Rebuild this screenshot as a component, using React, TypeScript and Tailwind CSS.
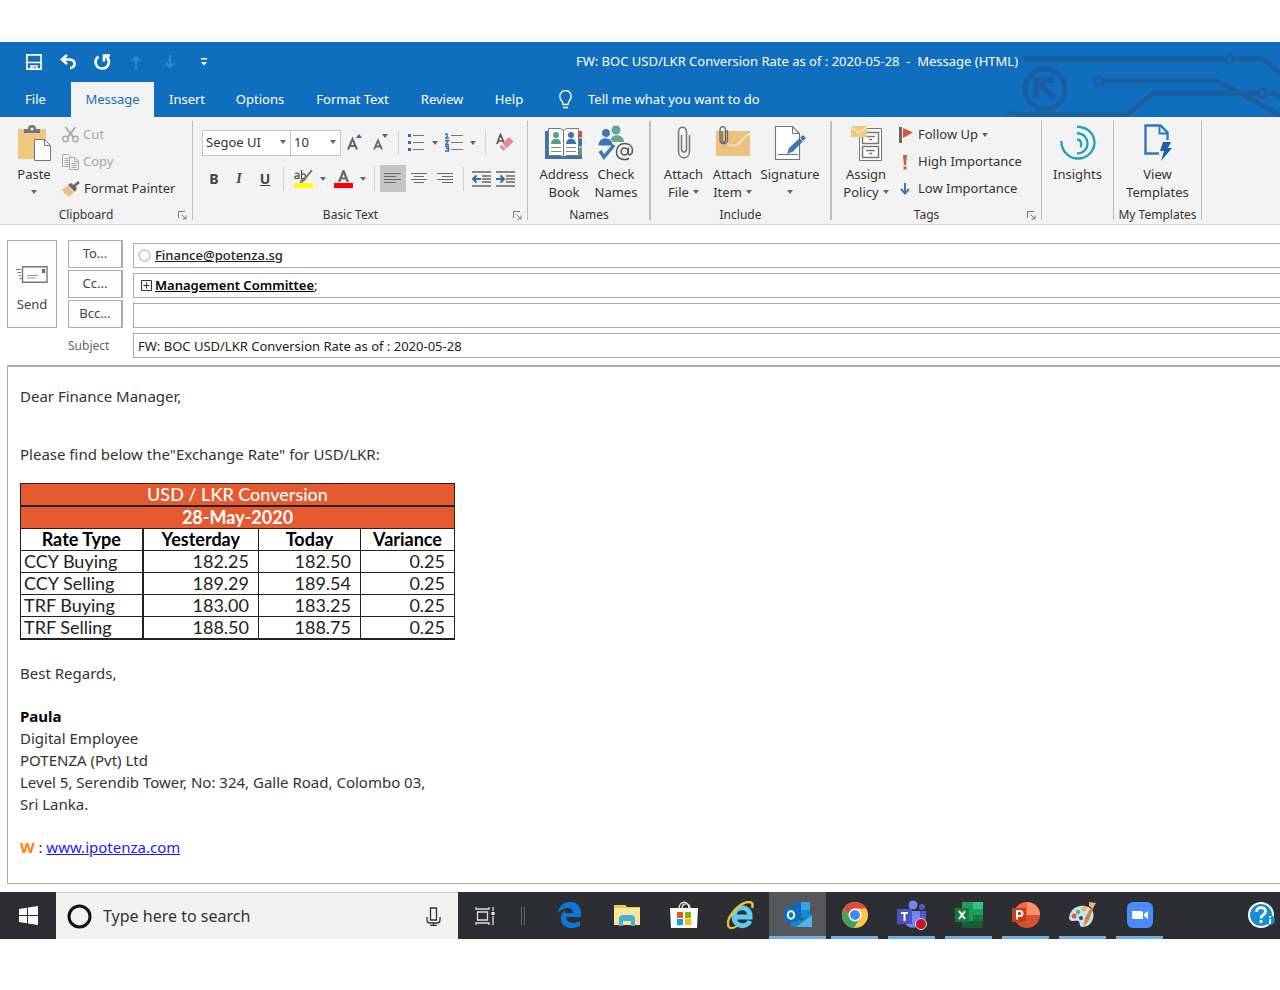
import { useState } from 'react';
import type { ReactNode } from 'react';
import clsx from 'clsx';

const rates = [
  { type: 'CCY Buying', yesterday: '182.25', today: '182.50', variance: '0.25' },
  { type: 'CCY Selling', yesterday: '189.29', today: '189.54', variance: '0.25' },
  { type: 'TRF Buying', yesterday: '183.00', today: '183.25', variance: '0.25' },
  { type: 'TRF Selling', yesterday: '188.50', today: '188.75', variance: '0.25' },
];

const tabs = [
  { name: 'File', width: 'w-[71px]' },
  { name: 'Message', width: 'w-[83px]' },
  { name: 'Insert', width: 'w-[66px]' },
  { name: 'Options', width: 'w-[80px]' },
  { name: 'Format Text', width: 'w-[105px]' },
  { name: 'Review', width: 'w-[74px]' },
  { name: 'Help', width: 'w-[60px]' },
];

function Arrow({ className = '' }: { className?: string }) {
  return (
    <svg viewBox="0 0 6 4" className={clsx('inline-block h-1 w-1.5 shrink-0 fill-[#666]', className)} aria-hidden="true">
      <path d="M0 0h6L3 4z" />
    </svg>
  );
}

function Launcher() {
  return (
    <button aria-label="More options" className="absolute right-[5px] bottom-0">
      <svg width="9" height="9" viewBox="0 0 9 9" fill="none" stroke="#777">
        <path d="M.5 7V.5H7M3.500 3.500l4 4M8 4.500V8H4.500" />
      </svg>
    </button>
  );
}

interface GroupProps {
  label?: string;
  launcher?: boolean;
  className: string;
  children: ReactNode;
}

function Group({ label, launcher, className, children }: GroupProps) {
  return (
    <section className={clsx('relative my-1 flex shrink-0 flex-col border-[#bdbdbd]', className)}>
      <div className="flex h-[81px] shrink-0">{children}</div>
      <div className={clsx('mt-[5px] text-center text-xs leading-4 whitespace-nowrap', launcher && 'pr-5')}>{label}</div>
      {launcher && <Launcher />}
    </section>
  );
}

interface BigButtonProps {
  icon: ReactNode;
  lines: string[];
  arrow?: boolean;
  className: string;
}

function BigButton({ icon, lines, arrow, className }: BigButtonProps) {
  return (
    <button className={clsx('flex shrink-0 flex-col items-center text-[13px] leading-[18px] whitespace-nowrap', className)}>
      <span className="flex h-[44px] items-center">{icon}</span>
      {lines.map((line, i) => (
        <span key={line} className="flex items-center gap-1">
          {line}
          {arrow && i > 0 && <Arrow />}
        </span>
      ))}
      {arrow && lines.length === 1 && <Arrow className="mt-[7px]" />}
    </button>
  );
}

function SmallButton({ icon, children, className }: { icon: ReactNode; children: ReactNode; className?: string }) {
  return (
    <button className={clsx('flex h-[27px] items-center gap-1 text-[13px] whitespace-nowrap', className)}>
      {icon}
      {children}
    </button>
  );
}

function Tool({ label, className, children }: { label: string; className: string; children: ReactNode }) {
  return (
    <button aria-label={label} className={clsx('flex h-[27px] shrink-0 items-center justify-center', className)}>
      {children}
    </button>
  );
}

function Divider() {
  return <span className="mx-[5px] h-6 w-px shrink-0 bg-[#d0d0d0]" />;
}

function Lines({ d }: { d: string }) {
  return (
    <svg width="18" height="14" viewBox="0 0 18 14" fill="none" stroke="#6a6a6a" strokeWidth="1.200">
      <path d={d} />
    </svg>
  );
}

/* Ribbon icons */

function PasteIcon() {
  return (
    <svg width="34" height="36" viewBox="0 0 34 36">
      <path d="M1 4h28v30H1z" fill="#edc87e" />
      <path d="M7 8V4h4a4 4 0 0 1 8 0h4v4z" fill="#777" />
      <circle cx="15" cy="4" r="1.500" fill="#f3f3f3" />
      <path d="M17.500 14.500h10l6 6v15h-16z" fill="#fff" stroke="#777" />
      <path d="M27.500 14.500v6h6" fill="none" stroke="#777" />
    </svg>
  );
}

function CutIcon() {
  return (
    <svg width="17" height="17" viewBox="0 0 17 17" fill="none" stroke="#a9a9a9" strokeWidth="1.400">
      <circle cx="3.500" cy="13" r="2.700" />
      <circle cx="13.500" cy="13" r="2.700" />
      <path d="M3.500 1l8 10.500M13.500 1l-8 10.500" strokeWidth="2" />
    </svg>
  );
}

function CopyIcon() {
  return (
    <svg width="17" height="16" viewBox="0 0 17 16" fill="#f3f3f3" stroke="#a9a9a9">
      <path d="M.5 12.500V.5h6l3 3v9zM2.500 4.500h4M2.500 6.500h4M2.500 8.500h4M2.500 10.500h4" />
      <path d="M7.500 15.500v-12h5.500l3.500 3.500v8.500zM12.500 3.500V7.500h4M9.500 9.500h5M9.500 11.500h5M9.500 13.500h5" />
    </svg>
  );
}

function PainterIcon() {
  return (
    <svg width="18" height="16" viewBox="0 0 18 16">
      <path d="M0 8l6-3 6 6-5 5-3-3H2.500z" fill="#edbf7b" />
      <path d="M6 4l3-2 6 5-2 4z" fill="#666" />
      <path d="M11 6l6-5" stroke="#666" strokeWidth="2.500" />
    </svg>
  );
}

function AddressBookIcon() {
  return (
    <svg width="38" height="33" viewBox="0 0 38 33">
      <path d="M0 4h37v28H0z" fill="#3b74b3" />
      <path d="M33 4h4v7h-4z" fill="#d8512f" />
      <path d="M33 20h4v8h-4z" fill="#56a286" />
      <path d="M33 11h5M33 20h5" stroke="#f3f3f3" />
      <path d="M3.500 1.500h12l3 2 3-2h12v27h-12l-3 1.500-3-1.500h-12z" fill="#fff" stroke="#777" />
      <path d="M18.500 3v27" stroke="#777" />
      <circle cx="11" cy="8" r="3" fill="#56a286" />
      <path d="M6 17c0-7 10-7 10 0z" fill="#56a286" />
      <circle cx="26" cy="8" r="3" fill="#3b74b3" />
      <path d="M21 17c0-7 10-7 10 0z" fill="#3b74b3" />
      <path d="M6 20.500h10M6 24.500h10M21 20.500h10M21 24.500h10" stroke="#888" />
    </svg>
  );
}

function CheckNamesIcon() {
  return (
    <svg width="36" height="36" viewBox="0 0 36 36">
      <circle cx="18" cy="5" r="4.500" fill="#65a98c" />
      <path d="M12 17c0-9 14-9 14 0z" fill="#65a98c" />
      <circle cx="8" cy="8" r="4.500" fill="#3f75b8" stroke="#f3f3f3" />
      <path d="M0 21c0-11 15-11 15 0z" fill="#3f75b8" stroke="#f3f3f3" />
      <path d="M2 26l4 6L16 20" fill="none" stroke="#3f75b8" strokeWidth="3.500" />
      <circle cx="27" cy="27" r="10" fill="#f3f3f3" />
      <circle cx="26.500" cy="26.500" r="3.500" fill="none" stroke="#555" strokeWidth="1.500" />
      <path d="M30.500 22.500l-.5 5.500c0 3 4.500 2 4.500-2.500 0-5-4-7-8-7-5 0-8 4-8 8.500 0 7 7.500 9 12.500 6.500" fill="none" stroke="#555" strokeWidth="1.500" />
    </svg>
  );
}

function ClipIcon() {
  return (
    <svg width="14" height="34" viewBox="0 0 14 34" fill="none" stroke="#777" strokeWidth="1.500">
      <path d="M4.500 9v14c0 4 5 4 5 0V6c0-6.500-8-6.500-8 0v19c0 9 11 9 11 0V9" />
    </svg>
  );
}

function AttachItemIcon() {
  return (
    <svg width="34" height="36" viewBox="0 0 34 36">
      <path d="M0 6h34v25H0z" fill="#eac17d" />
      <path d="M9 15c3 6 12 8 16 1 3-4 6-6 9-7" fill="none" stroke="#f8efdd" strokeWidth="1.500" />
      <path d="M6 6v9c0 3 3.500 3 3.500 0V5c0-4.500-5.500-4.500-5.500 0v10c0 5 7.500 5 7.500 0V5" fill="none" stroke="#666" strokeWidth="1.300" />
    </svg>
  );
}

function SignatureIcon() {
  return (
    <svg width="32" height="36" viewBox="0 0 32 36">
      <path d="M1.500 1.500h17l7 7v26h-24z" fill="#fff" stroke="#777" strokeWidth="1.200" />
      <path d="M18.500 1.500v7h7" fill="none" stroke="#777" />
      <path d="M4 29.500h20" stroke="#3f75b8" />
      <path d="M13 29l2-6L29 10l3 3-13 13.500z" fill="#3f75b8" />
      <path d="M26 13l3 3" stroke="#fff" />
    </svg>
  );
}

function PolicyIcon() {
  return (
    <svg width="31" height="36" viewBox="0 0 31 36">
      <path d="M8.500 3.500h22v32h-22z" fill="#fff" stroke="#777" />
      <path d="M11.500 7.500h16v11h-16zM11.500 21.500h16v11h-16z" fill="none" stroke="#777" strokeWidth="1.500" />
      <path d="M15 11.500h9M15 25.500h9" stroke="#777" strokeWidth="1.500" />
      <path d="M18 14.500h3M18 28.500h3" stroke="#777" strokeWidth="1.500" />
      <path d="M0 1h16v11H0z" fill="#eec980" />
      <path d="M0 2l8 6 8-6" fill="none" stroke="#fff" />
    </svg>
  );
}

function InsightsIcon() {
  return (
    <svg width="36" height="36" viewBox="0 0 36 36" fill="none" stroke="#25a3b4" strokeWidth="2.400">
      <path d="M1.500 16a16.500 16.500 0 0 0 33 2C34.500 9 28 2 17 1.800" />
      <path d="M17 8c14 1 14 20 0 20.500" />
      <path d="M17 14.500c5 0 5 6.500 3 7.500" />
    </svg>
  );
}

function TemplatesIcon() {
  return (
    <svg width="28" height="38" viewBox="0 0 28 38">
      <path d="M15 29.500H1.500v-28h15l7 7V16" fill="none" stroke="#2b79c2" strokeWidth="2.400" />
      <path d="M15.500 1.500v8h8" fill="none" stroke="#2b79c2" strokeWidth="2" />
      <path d="M19 18h8l-3 6h4L17 37l3-10h-4z" fill="#1b5fa8" />
    </svg>
  );
}

function EraserIcon() {
  return (
    <svg width="18" height="20" viewBox="0 0 18 20">
      <path d="M1 11L4.500 1.500 8 10M2.500 8h4" fill="none" stroke="#555" strokeWidth="1.700" />
      <path d="M6.500 10L13 4l4.500 4.500-7 7z" fill="#e8879a" />
      <path d="M5.500 11.500l4 4-2 2.500-4-4z" fill="#e8879a" />
    </svg>
  );
}

function Indent({ out }: { out?: boolean }) {
  return (
    <svg width="19" height="16" viewBox="0 0 19 16" fill="none">
      <path d="M0 1h19M10 5h9M10 8h9M10 11h9M0 15h19" stroke="#666" strokeWidth="1.600" />
      <path d={out ? 'M9 8H1M4.500 4.500L1 8l3.500 3.500' : 'M0 8h8M4.500 4.500L8 8l-3.500 3.500'} stroke="#2e6db4" strokeWidth="2" />
    </svg>
  );
}

/* Decoration in the right end of the title bar */

function Circuit() {
  return (
    <svg width="276" height="75" viewBox="0 0 276 75" fill="none" stroke="#195f9f" strokeWidth="5" className="pointer-events-none absolute top-0 right-0">
      <path d="M20 17h201M230 17h27c8 3 14 10 22 17" />
      <path d="M100 39h112c16 6 44 24 68 36M12 73h110l28-22h104M264 51c5 0 9 2 14 5" />
      <circle cx="225" cy="17" r="4" strokeWidth="3" />
      <circle cx="95" cy="39" r="4.500" strokeWidth="3" />
      <circle cx="258" cy="51" r="4" strokeWidth="3" fill="#106ebe" />
      <path d="M3 75a5 5 0 0 1 9-2" strokeWidth="3" />
      <circle cx="41" cy="47" r="20" />
      <path d="M32 56V38h18M33 39l17 17" strokeWidth="6" />
    </svg>
  );
}

/* Taskbar icons */

function EdgeIcon() {
  return (
    <svg width="24" height="26" viewBox="0 0 24 26">
      <path d="M0 11C2-4 23-4 23 11v4H8c1 7 9 7 14 4v5C12 29 2 25 3 15c0-3 3-6 5-7-1 1-1 2-1 3h8C15 4 5 5 0 11z" fill="#0b78d8" />
    </svg>
  );
}

function FolderIcon() {
  return (
    <svg width="26" height="22" viewBox="0 0 26 22">
      <path d="M0 1h11l2 2h13v18H0z" fill="#f0c954" />
      <path d="M0 4h26v17H0z" fill="#fbe596" />
      <path d="M5 22v-9l3-2h10l3 2v9h-4v-5H9v5z" fill="#3fb2e3" />
    </svg>
  );
}

function StoreIcon() {
  return (
    <svg width="28" height="28" viewBox="0 0 28 28">
      <path d="M9 8c0-9 10-9 10 0M12 8c0-7 8-7 8 0" fill="none" stroke="#ddd" strokeWidth="1.500" />
      <path d="M0 7h28l-1 20H1z" fill="#fff" />
      <path d="M7 11h6v6H7z" fill="#f25022" />
      <path d="M15 11h6v6h-6z" fill="#7fba00" />
      <path d="M7 18h6v6H7z" fill="#00a4ef" />
      <path d="M15 18h6v6h-6z" fill="#ffb900" />
    </svg>
  );
}

function ExplorerIcon() {
  return (
    <svg width="28" height="28" viewBox="0 0 28 28" fill="none">
      <path d="M23 20c-4 8-16 5-16-4C7 4 23 4 23 15v1H9" stroke="#5ccdf2" strokeWidth="5" />
      <path d="M2 26C-3 19 12 1 22 1c4 0 4 3 3 6" stroke="#eec22c" strokeWidth="2.500" />
      <path d="M2 26c1 2 5 1 8-1" stroke="#eec22c" strokeWidth="2" />
    </svg>
  );
}

function OutlookIcon() {
  return (
    <svg width="28" height="26" viewBox="0 0 28 26">
      <path d="M9 0h17v16H9z" fill="#1067b8" />
      <path d="M17 0h9v8h-9z" fill="#36a3e5" />
      <path d="M17 8h9v8h-9z" fill="#1589d6" />
      <path d="M7 25V13l10 6 11-6v12z" fill="#1a84d2" />
      <path d="M28 13v12H12z" fill="#4db4ec" />
      <path d="M0 6h14v14H0z" fill="#0a6fc9" />
      <ellipse cx="7" cy="13" rx="3.200" ry="3.700" fill="none" stroke="#fff" strokeWidth="2" />
    </svg>
  );
}

function ChromeIcon() {
  return (
    <svg width="28" height="28" viewBox="0 0 28 28">
      <circle cx="14" cy="14" r="13" fill="#f9ca43" />
      <path d="M2.700 7.500a13 13 0 0 1 22.600 0H14L8.500 17z" fill="#da4d3d" />
      <path d="M2.700 7.500A13 13 0 0 0 13 27l6-10H8.500z" fill="#3ba55c" />
      <circle cx="14" cy="14" r="6.500" fill="#fff" />
      <circle cx="14" cy="14" r="5" fill="#4688f1" />
    </svg>
  );
}

function TeamsIcon() {
  return (
    <svg width="30" height="30" viewBox="0 0 30 30">
      <circle cx="16" cy="5" r="4.500" fill="#7b83eb" />
      <circle cx="25" cy="7" r="3" fill="#5059c9" />
      <path d="M20 11h9v10c0 5-9 5-9 0z" fill="#5059c9" />
      <path d="M8 11h15v10c0 9-15 9-15 0z" fill="#7b83eb" />
      <path d="M0 9h15v15H0z" fill="#4b53bc" />
      <path d="M4 13h7M7.500 13v8" stroke="#fff" strokeWidth="2" />
      <circle cx="24" cy="24" r="5.500" fill="#c4122f" stroke="#e8d8dc" />
    </svg>
  );
}

function ExcelIcon() {
  return (
    <svg width="28" height="26" viewBox="0 0 28 26">
      <path d="M7 0h21v26H7z" fill="#1f9d61" />
      <path d="M18 0h10v7H18z" fill="#33c481" />
      <path d="M18 13h10v6H18z" fill="#107c41" />
      <path d="M7 19h21v7H7z" fill="#185c37" />
      <path d="M0 6h14v14H0z" fill="#107c41" />
      <path d="M4 9l6 8M10 9l-6 8" stroke="#fff" strokeWidth="2" />
    </svg>
  );
}

function PowerPointIcon() {
  return (
    <svg width="28" height="26" viewBox="0 0 28 26">
      <circle cx="15" cy="13" r="13" fill="#d35230" />
      <path d="M15 0a13 13 0 0 1 13 13H15z" fill="#ff8f6b" />
      <path d="M15 0v13H2A13 13 0 0 1 15 0z" fill="#ed6c47" />
      <path d="M0 6h14v14H0z" fill="#c43e1c" />
      <path d="M5 17.500V9h2.500c4 0 4 5 0 5H5" fill="none" stroke="#fff" strokeWidth="2" />
    </svg>
  );
}

function PaintIcon() {
  return (
    <svg width="28" height="28" viewBox="0 0 28 28">
      <path d="M0 17C1 3 20 1 24 11c2 6-2 15-10 15-5 0-2-5-5-6s-8 2-9-3z" fill="#c5e3f2" />
      <circle cx="5" cy="15" r="2.500" fill="#e2574c" />
      <circle cx="9" cy="11" r="2.200" fill="#60b75b" />
      <circle cx="15" cy="8" r="2.500" fill="#f2b62b" />
      <circle cx="12" cy="17" r="2" fill="#2b4b66" />
      <path d="M14 27l2-10 7-13 2 1-5 14z" fill="#d98736" />
      <path d="M20 1l7 1-3 5-4-2z" fill="#dcb98a" />
    </svg>
  );
}

function ZoomIcon() {
  return (
    <svg width="28" height="28" viewBox="0 0 28 28">
      <rect x="1" y="1" width="26" height="26" rx="6" fill="#4a8cff" />
      <path d="M6 10h9c2 0 2 1 2 2v6H8c-2 0-2-1-2-2zM18 13l4-3v8l-4-3z" fill="#fff" />
    </svg>
  );
}

const apps = [
  { name: 'Edge', icon: <EdgeIcon /> },
  { name: 'File Explorer', icon: <FolderIcon /> },
  { name: 'Store', icon: <StoreIcon /> },
  { name: 'Internet Explorer', icon: <ExplorerIcon /> },
  { name: 'Outlook', icon: <OutlookIcon />, active: true, running: true },
  { name: 'Chrome', icon: <ChromeIcon />, running: true },
  { name: 'Teams', icon: <TeamsIcon />, running: true },
  { name: 'Excel', icon: <ExcelIcon />, running: true },
  { name: 'PowerPoint', icon: <PowerPointIcon />, running: true },
  { name: 'Paint', icon: <PaintIcon />, running: true },
  { name: 'Zoom', icon: <ZoomIcon />, running: true },
];

function TitleBar() {
  return (
    <div className="relative flex h-10 items-center pl-[17px] text-[13px]">
      <button aria-label="Save" className="flex w-[34px] shrink-0 justify-center">
        <svg width="16" height="16" viewBox="0 0 16 16" fill="none" stroke="#fff" strokeWidth="1.700">
          <path d="M.9.900h14.200v14.200H.9zM1 8.500h14" />
          <path d="M5 15v-3h6v3M7.500 12v3" />
        </svg>
      </button>
      <button aria-label="Undo" className="flex w-[34px] shrink-0 justify-center">
        <svg width="17" height="16" viewBox="0 0 17 16" fill="none" stroke="#fff" strokeWidth="2.600">
          <path d="M7 1L2 5.500 7 10M2 5.500h7c7.500 0 7 8.500 1 8.500" />
        </svg>
      </button>
      <button aria-label="Redo" className="flex w-[34px] shrink-0 justify-center">
        <svg width="17" height="16" viewBox="0 0 17 16" fill="none" stroke="#fff" strokeWidth="2.600">
          <path d="M4.500 2.500C-1 7 2 14.500 8 14.500c7 0 9-8.500 4-12M10 7.500V1.500h6" />
        </svg>
      </button>
      <button aria-label="Previous item" className="flex w-[34px] shrink-0 justify-center">
        <svg width="10" height="14" viewBox="0 0 10 14" fill="none" stroke="#3389d3" strokeWidth="2.200">
          <path d="M5 14V2M1 6l4-4 4 4" />
        </svg>
      </button>
      <button aria-label="Next item" className="flex w-[34px] shrink-0 justify-center">
        <svg width="10" height="14" viewBox="0 0 10 14" fill="none" stroke="#3389d3" strokeWidth="2.200">
          <path d="M5 0v12M1 8l4 4 4-4" />
        </svg>
      </button>
      <button aria-label="Customize toolbar" className="flex w-[34px] shrink-0 justify-center">
        <svg width="6" height="8" viewBox="0 0 6 8" fill="#fff">
          <path d="M0 0h6v1.500H0zM0 4h6L3 7.500z" />
        </svg>
      </button>
      <h1 className="flex-1 pl-[93px] text-center whitespace-pre">
        FW: BOC USD/LKR Conversion Rate as of : 2020-05-28  -  Message (HTML)
      </h1>
    </div>
  );
}

function TabBar({ active, onSelect }: { active: string; onSelect: (name: string) => void }) {
  return (
    <nav className="relative flex h-[35px] items-stretch text-[13px]">
      {tabs.map((tab) => (
        <button
          key={tab.name}
          onClick={() => onSelect(tab.name)}
          className={clsx('shrink-0', tab.width, tab.name === active && 'bg-[#f3f3f3] text-[#106ebe]')}
        >
          {tab.name}
        </button>
      ))}
      <label htmlFor="tell-me" className="flex w-[49px] shrink-0 items-center justify-center pl-1" aria-label="Tell me">
        <svg width="13" height="19" viewBox="0 0 13 19" fill="none" stroke="#fff" strokeWidth="1.300">
          <path d="M4 14.500c0-4-3.200-4-3.200-8.300a5.700 5.700 0 0 1 11.400 0c0 4.300-3.200 4.300-3.200 8.300zM4 17.500h5" />
        </svg>
      </label>
      <input id="tell-me" placeholder="Tell me what you want to do" className="w-[220px] bg-transparent placeholder:text-white placeholder:opacity-100 focus:outline-none" />
    </nav>
  );
}

function BasicText() {
  return (
    <div className="flex flex-col gap-[9px] pt-2 pl-2">
      <div className="flex items-center">
        <div className="relative">
          <select aria-label="Font" className="h-[26px] w-[89px] appearance-none border border-[#c6c6c6] bg-white pl-[3px] text-[13px]">
            <option>Segoe UI</option>
          </select>
          <Arrow className="pointer-events-none absolute top-[11px] right-[5px]" />
        </div>
        <div className="relative">
          <select aria-label="Font size" className="h-[26px] w-[50px] appearance-none border border-l-0 border-[#c6c6c6] bg-white pl-[3px] text-[13px]">
            <option>10</option>
          </select>
          <Arrow className="pointer-events-none absolute top-[11px] right-[5px]" />
        </div>
        <Tool label="Grow font" className="w-[26px]">
          <svg width="15" height="18" viewBox="0 0 15 18" fill="none">
            <path d="M1 15.500L5.500 5 10 15.500M3 12h5.500" stroke="#666" strokeWidth="2" />
            <path d="M9 4l3-4 3 4z" fill="#2e6db4" />
          </svg>
        </Tool>
        <Tool label="Shrink font" className="w-[26px]">
          <svg width="15" height="18" viewBox="0 0 15 18" fill="none">
            <path d="M1 15.500L5 6.500 9 15.500M2.500 12.500h5" stroke="#666" strokeWidth="1.800" />
            <path d="M9 0h6l-3 4z" fill="#2e6db4" />
          </svg>
        </Tool>
        <Divider />
        <Tool label="Bullets" className="w-6">
          <svg width="16" height="18" viewBox="0 0 16 18">
            <path d="M0 0h3v3H0zM0 7h3v3H0zM0 14h3v3H0z" fill="#2e6db4" />
            <path d="M5 1.500h11M5 8.500h11M5 15.500h11" stroke="#777" />
          </svg>
        </Tool>
        <Tool label="Bullet styles" className="w-[14px]"><Arrow /></Tool>
        <Tool label="Numbering" className="w-6">
          <svg width="18" height="19" viewBox="0 0 18 19" fill="none">
            <path d="M0 1h2v4M0 5h4M0 7.500h3.500L.5 11.500H4M0 13.500h3.500v4.500H0M1 15.500h2" stroke="#2e6db4" strokeWidth="1.400" />
            <path d="M6 2.500h12M6 9.500h12M6 16.500h12" stroke="#777" />
          </svg>
        </Tool>
        <Tool label="Number styles" className="w-[14px]"><Arrow /></Tool>
        <Divider />
        <Tool label="Clear formatting" className="w-7"><EraserIcon /></Tool>
      </div>
      <div className="flex items-center text-sm text-[#444]">
        <Tool label="Bold" className="w-6 font-bold">B</Tool>
        <Tool label="Italic" className="w-[26px] font-['Liberation_Serif'] font-bold italic">I</Tool>
        <Tool label="Underline" className="w-[26px] font-bold underline">U</Tool>
        <Divider />
        <Tool label="Highlight" className="w-7">
          <svg width="19" height="19" viewBox="0 0 19 19" fill="none">
            <path d="M1 4.500c3-1 4 0 4 1.500v4M5 7C1 6.500 0 8 1.500 9.500 3 10 5 9 5 7.500M7.500 1v9M7.500 6c2-2 4.500-1 4 1.500S9 10 7.500 9" stroke="#555" strokeWidth="1.300" />
            <path d="M18 1l-8 10-3 2 1-3" stroke="#777" strokeWidth="2" />
            <path d="M0 14h19v5H0z" fill="#ff0" />
          </svg>
        </Tool>
        <Tool label="Highlight color" className="w-3"><Arrow /></Tool>
        <Tool label="Font color" className="w-7">
          <svg width="19" height="18" viewBox="0 0 19 18" fill="none">
            <path d="M5 12L9.500 1 14 12M6.500 8.500h6" stroke="#666" strokeWidth="2.200" />
            <path d="M0 13h19v5H0z" fill="#f00" />
          </svg>
        </Tool>
        <Tool label="Font colors" className="w-3"><Arrow /></Tool>
        <Divider />
        <Tool label="Align left" className="w-[26px] bg-[#c5c5c5]"><Lines d="M0 1.500h17M0 4.500h12M0 7.500h17M0 10.500h12" /></Tool>
        <Tool label="Center" className="w-[26px]"><Lines d="M1 1.500h16M4 4.500h10M1 7.500h16M4 10.500h10" /></Tool>
        <Tool label="Align right" className="w-[26px]"><Lines d="M1 1.500h16M6 4.500h11M1 7.500h16M6 10.500h11" /></Tool>
        <Divider />
        <Tool label="Decrease indent" className="w-6"><Indent out /></Tool>
        <Tool label="Increase indent" className="w-6"><Indent /></Tool>
      </div>
    </div>
  );
}

function Ribbon() {
  return (
    <div className="flex h-[108px] overflow-hidden border-b border-[#d2d2d2] bg-[#f3f3f3] text-[#333]">
      <Group label="Clipboard" launcher className="w-[193px] border-r">
        <BigButton icon={<PasteIcon />} lines={['Paste']} arrow className="ml-[10px] w-[48px]" />
        <div className="ml-1 shrink-0">
          <SmallButton icon={<CutIcon />} className="text-[#a9a9a9]">Cut</SmallButton>
          <SmallButton icon={<CopyIcon />} className="text-[#a9a9a9]">Copy</SmallButton>
          <SmallButton icon={<PainterIcon />}>Format Painter</SmallButton>
        </div>
      </Group>
      <Group label="Basic Text" launcher className="w-[335px] border-r pl-px">
        <BasicText />
      </Group>
      <Group label="Names" className="w-[123px] border-r-2 pl-px">
        <BigButton icon={<AddressBookIcon />} lines={['Address', 'Book']} className="ml-[9px] w-[52px]" />
        <BigButton icon={<CheckNamesIcon />} lines={['Check', 'Names']} className="w-[52px]" />
      </Group>
      <Group label="Include" className="w-[181px] border-r-2">
        <BigButton icon={<ClipIcon />} lines={['Attach', 'File']} arrow className="ml-2 w-[49px]" />
        <BigButton icon={<AttachItemIcon />} lines={['Attach', 'Item']} arrow className="w-[49px]" />
        <BigButton icon={<SignatureIcon />} lines={['Signature']} arrow className="w-[66px]" />
      </Group>
      <Group label="Tags" launcher className="w-[210px] border-r">
        <BigButton icon={<PolicyIcon />} lines={['Assign', 'Policy']} arrow className="ml-[9px] w-[50px]" />
        <div className="ml-2 shrink-0">
          <SmallButton
            icon={
              <svg width="15" height="16" viewBox="0 0 15 16">
                <path d="M0 0h3v16H0z" fill="#666" />
                <path d="M4 1l10 4.500L4 11z" fill="#dd5434" />
              </svg>
            }
          >
            Follow Up <Arrow />
          </SmallButton>
          <SmallButton
            icon={
              <svg width="15" height="16" viewBox="0 0 15 16" fill="#dd5434">
                <path d="M4 1h4L7 11H5zM4.500 12.500h3v3h-3z" />
              </svg>
            }
          >
            High Importance
          </SmallButton>
          <SmallButton
            icon={
              <svg width="15" height="16" viewBox="0 0 15 16" fill="none" stroke="#3f75b8" strokeWidth="2">
                <path d="M6 2v10M2 8l4 4.500L10 8" />
              </svg>
            }
          >
            Low Importance
          </SmallButton>
        </div>
      </Group>
      <Group className="w-[72px] border-r">
        <BigButton icon={<InsightsIcon />} lines={['Insights']} className="w-[71px]" />
      </Group>
      <Group label="My Templates" className="w-[88px] border-r">
        <BigButton icon={<TemplatesIcon />} lines={['View', 'Templates']} className="w-[87px]" />
      </Group>
    </div>
  );
}

function AddressRow({ label, children }: { label: string; children?: ReactNode }) {
  return (
    <div className="flex h-7 items-end gap-[10px]">
      <button className="h-7 w-[55px] shrink-0 border border-r-2 border-[#ababab] bg-[#fdfdfd] text-[13px] text-[#444]">{label}</button>
      <div className="flex h-[25px] flex-1 items-center border border-r-0 border-[#ababab] px-1 text-[13px] text-[#222]">{children}</div>
    </div>
  );
}

function MessageHeader() {
  return (
    <div className="flex items-start gap-[11px] pt-[15px] pl-[7px]">
      <button className="flex h-[88px] w-[50px] shrink-0 flex-col items-center justify-center gap-3 border border-[#ababab] bg-[#fdfdfd] pt-3 text-[13px] text-[#444]">
        <svg width="32" height="17" viewBox="0 0 32 17" fill="none">
          <path d="M0 3.500h5M1.500 6.500H5M3 9.500h2M4 12.500h2" stroke="#777" />
          <path d="M6.500.8h24.500v15.400H6.500z" fill="#fff" stroke="#777" strokeWidth="1.400" />
          <path d="M11 9.500h11M11 12h9" stroke="#999" />
          <path d="M26 3h3v4h-3z" fill="#2e75b6" />
        </svg>
        Send
      </button>
      <div className="flex flex-1 flex-col gap-[2px]">
        <AddressRow label="To...">
          <svg width="13" height="13" viewBox="0 0 13 13" className="mr-1" fill="none" stroke="#a9cbd8" strokeWidth="1.400">
            <circle cx="6.500" cy="6.500" r="5.500" />
          </svg>
          <a href="mailto:Finance@potenza.sg" className="font-medium underline">Finance@potenza.sg</a>
        </AddressRow>
        <AddressRow label="Cc...">
          <svg width="11" height="11" viewBox="0 0 11 11" className="mx-[3px]" fill="none" stroke="#333">
            <path d="M.5.500h10v10H.5zM2.500 5.500h6M5.500 2.500v6" />
          </svg>
          <a href="#management-committee" className="font-semibold text-black underline">Management Committee</a>;
        </AddressRow>
        <AddressRow label="Bcc...">
          <input aria-label="Bcc" className="w-full focus:outline-none" />
        </AddressRow>
        <div className="flex h-7 items-end gap-[10px]">
          <label htmlFor="subject" className="w-[55px] shrink-0 text-xs leading-[25px] text-[#666]">Subject</label>
          <input
            id="subject"
            defaultValue="FW: BOC USD/LKR Conversion Rate as of : 2020-05-28"
            className="h-[25px] min-w-0 flex-1 border border-r-0 border-[#ababab] px-1 text-[13px] text-[#222] focus:outline-none"
          />
        </div>
      </div>
    </div>
  );
}

function RateTable() {
  return (
    <table className="mt-[18px] w-[435px] table-fixed border-collapse border border-b-2 border-[#222] font-['Lato',sans-serif] text-lg leading-[21px] text-[#222]">
      <colgroup>
        <col className="w-[122px]" />
        <col className="w-[116px]" />
        <col className="w-[102px]" />
        <col />
      </colgroup>
      <thead>
        <tr className="h-[22px] border-b-2 border-[#222] bg-[#e65a31] text-white">
          <th colSpan={4} className="p-0 font-medium">USD / LKR Conversion</th>
        </tr>
        <tr className="h-[22px] border-b border-[#222] bg-[#e65a31] text-white">
          <th colSpan={4} className="p-0 font-bold">28-May-2020</th>
        </tr>
        <tr className="h-[22px] text-black">
          {['Rate Type', 'Yesterday', 'Today', 'Variance'].map((title) => (
            <th key={title} className="border border-[#222] p-0 font-bold first:border-r-2">{title}</th>
          ))}
        </tr>
      </thead>
      <tbody>
        {rates.map((rate) => (
          <tr key={rate.type} className="h-[22px]">
            <td className="border border-r-2 border-[#222] py-0 pr-0 pl-[3px]">{rate.type}</td>
            <td className="border border-[#222] py-0 pr-[9px] pl-0 text-right">{rate.yesterday}</td>
            <td className="border border-[#222] py-0 pr-[9px] pl-0 text-right">{rate.today}</td>
            <td className="border border-[#222] py-0 pr-[9px] pl-0 text-right">{rate.variance}</td>
          </tr>
        ))}
      </tbody>
    </table>
  );
}

function MessageBody() {
  return (
    <main className="mt-[7px] ml-[7px] border border-t-2 border-r-0 border-[#ababab] pt-[18px] pb-[25px] pl-3 text-[15px] leading-[22px] text-[#333]">
      <p>Dear Finance Manager,</p>
      <p className="mt-9">Please find below the"Exchange Rate" for USD/LKR:</p>
      <RateTable />
      <p className="mt-[22px]">Best Regards,</p>
      <address className="mt-[21px] not-italic">
        <strong className="block text-black">Paula</strong>
        Digital Employee
        <br />
        POTENZA (Pvt) Ltd
        <br />
        Level 5, Serendib Tower, No: 324, Galle Road, Colombo 03,
        <br />
        Sri Lanka.
      </address>
      <p className="mt-[21px]">
        <b className="text-[#ff7f00]">W</b> : <a href="#ipotenza" className="text-[#1a1aff] underline">www.ipotenza.com</a>
      </p>
    </main>
  );
}

function Taskbar() {
  return (
    <footer className="mt-2 flex h-[47px] overflow-hidden bg-[#2c2e33]">
      <button aria-label="Start" className="flex w-14 shrink-0 items-center justify-center">
        <svg width="19" height="19" viewBox="0 0 19 19" fill="#fff">
          <path d="M0 3l8-1.200V9H0zM9 1.600L19 0v9H9zM0 10h8v7.200L0 16zM9 10h10v9L9 17.400z" />
        </svg>
      </button>
      <div className="flex w-[402px] shrink-0 items-center border-t border-[#ccc] bg-[#f2f2f2] px-[11px]">
        <label htmlFor="search" aria-label="Search">
          <svg width="25" height="25" viewBox="0 0 25 25" fill="none" stroke="#111" strokeWidth="3">
            <circle cx="12.500" cy="12.500" r="10.500" />
          </svg>
        </label>
        <input id="search" placeholder="Type here to search" className="ml-[11px] min-w-0 flex-1 bg-transparent text-base placeholder:text-[#333] placeholder:opacity-100 focus:outline-none" />
        <button aria-label="Voice search" className="mr-1.5">
          <svg width="15" height="19" viewBox="0 0 15 19" fill="none" stroke="#333" strokeWidth="1.300">
            <path d="M4.500 1h6v12h-6zM1 10v3c0 2 1 3 3 3h7c2 0 3-1 3-3v-3M7.500 16v2.500M4 18.400h7" />
          </svg>
        </button>
      </div>
      <button aria-label="Task view" className="flex w-[54px] shrink-0 items-center justify-center">
        <svg width="20" height="18" viewBox="0 0 20 18" fill="none" stroke="#ddd" strokeWidth="1.300">
          <path d="M2.500 5h10v8h-10zM1 0v2h13V0M1 18v-2h13v2M18 0v4M18 9v9" />
          <path d="M16.500 5h3v3h-3z" fill="#fff" stroke="none" />
        </svg>
      </button>
      <span className="my-auto mr-4 ml-[9px] h-[18px] w-1 shrink-0 border-x border-[#66686d]" />
      {apps.map((app) => (
        <button
          key={app.name}
          aria-label={app.name}
          className={clsx('flex w-[57px] shrink-0 flex-col items-center', !app.active && 'px-[5px]')}
        >
          <span className={clsx('flex w-full flex-1 items-center justify-center pt-px', app.active && 'bg-[#55575b]')}>{app.icon}</span>
          <span className={clsx('h-[3px] w-full', app.running && 'bg-[#6bb0e8]')} />
        </button>
      ))}
      <button aria-label="Get help" className="ml-auto flex w-[38px] shrink-0 items-center justify-center">
        <svg width="27" height="27" viewBox="0 0 27 27">
          <circle cx="13" cy="13" r="12" fill="#168fd0" stroke="#fff" strokeWidth="2" />
          <path d="M8.500 10c0-6 9-5.500 9-.5 0 3.500-4.500 3-4.500 7M13 18v3" fill="none" stroke="#fff" strokeWidth="2.800" />
          <circle cx="22" cy="18" r="5" fill="#168fd0" />
          <path d="M22 14v2M22 17v5" stroke="#fff" strokeWidth="2" />
        </svg>
      </button>
    </footer>
  );
}

export default function App() {
  const [activeTab, setActiveTab] = useState('Message');

  return (
    <div className="min-h-screen overflow-x-hidden bg-white pt-[42px] font-['Noto_Sans',sans-serif]">
      <header className="relative bg-[#106ebe] text-white">
        <Circuit />
        <TitleBar />
        <TabBar active={activeTab} onSelect={setActiveTab} />
      </header>
      <Ribbon />
      <MessageHeader />
      <MessageBody />
      <Taskbar />
    </div>
  );
}
